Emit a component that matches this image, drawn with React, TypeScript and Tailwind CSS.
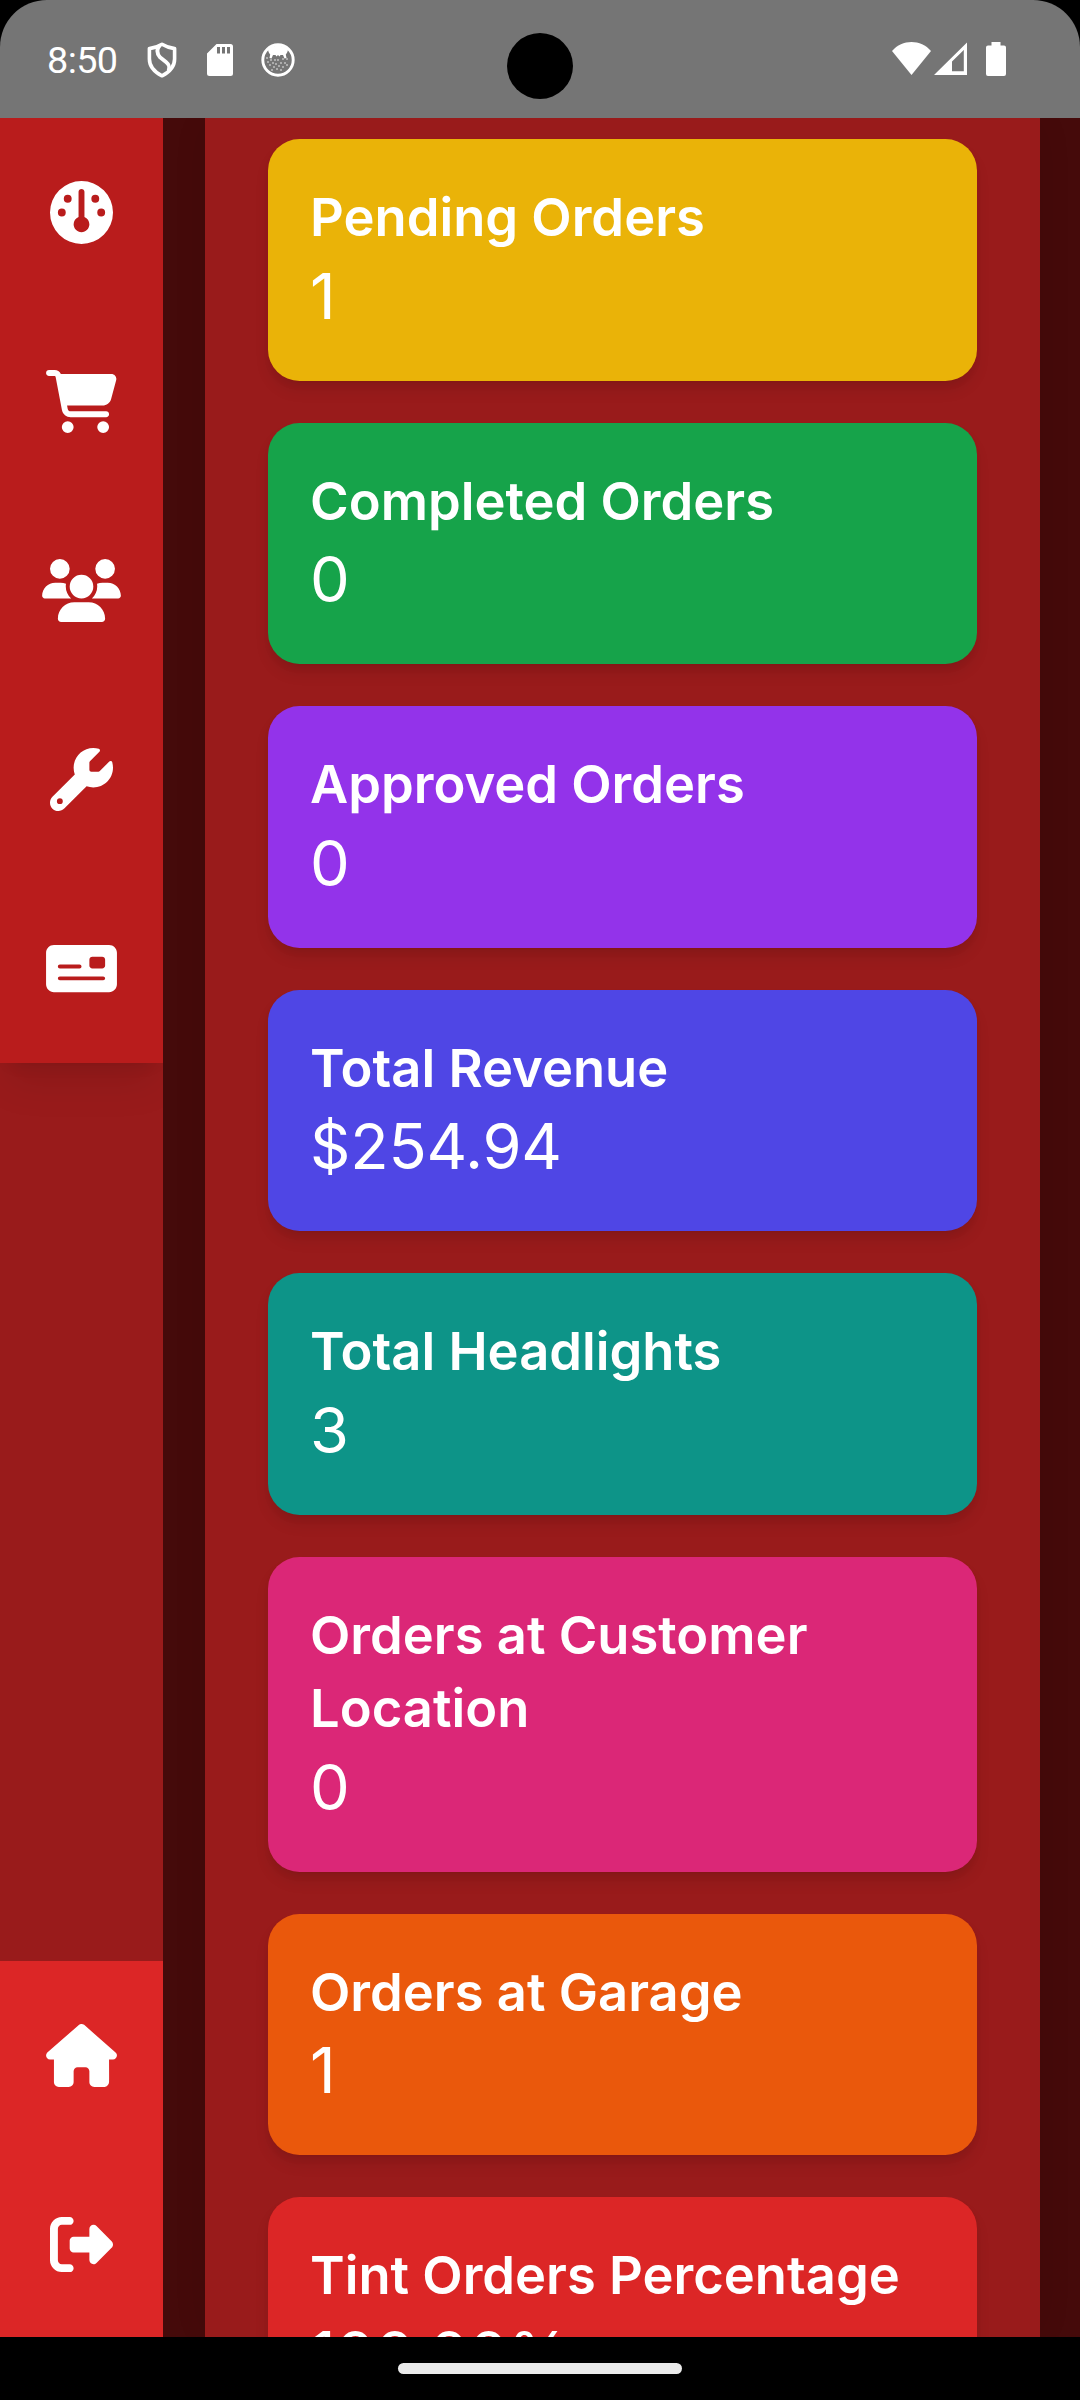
import React from "react";
import type { IconType } from "react-icons";
import {
  FaCartShopping,
  FaGauge,
  FaHouse,
  FaMoneyCheck,
  FaRightFromBracket,
  FaUsers,
  FaWrench,
} from "react-icons/fa6";

type NavItem = { label: string; Icon: IconType; width: string };
type Stat = { title: string; value: string; color: string };

const mainNav: NavItem[] = [
  { label: "Dashboard", Icon: FaGauge, width: "w-[63px]" },
  { label: "Orders", Icon: FaCartShopping, width: "w-[71px]" },
  { label: "Customers", Icon: FaUsers, width: "w-[79px]" },
  { label: "Services", Icon: FaWrench, width: "w-[63px]" },
  { label: "Payments", Icon: FaMoneyCheck, width: "w-[71px]" },
];

const footerNav: NavItem[] = [
  { label: "Home", Icon: FaHouse, width: "w-[71px]" },
  { label: "Log out", Icon: FaRightFromBracket, width: "w-[63px]" },
];

const stats: Stat[] = [
  { title: "Pending Orders", value: "1", color: "bg-[#eab308]" },
  { title: "Completed Orders", value: "0", color: "bg-[#16a34a]" },
  { title: "Approved Orders", value: "0", color: "bg-[#9333ea]" },
  { title: "Total Revenue", value: "$254.94", color: "bg-[#4f46e5]" },
  { title: "Total Headlights", value: "3", color: "bg-[#0d9488]" },
  { title: "Orders at Customer Location", value: "0", color: "bg-[#db2777]" },
  { title: "Orders at Garage", value: "1", color: "bg-[#ea580c]" },
  { title: "Tint Orders Percentage", value: "100.00%", color: "bg-[#dc2626]" },
];

function ShieldIcon() {
  return (
    <svg className="h-[36px] w-[30px]" viewBox="0 0 30 36" fill="none" stroke="#fff" strokeWidth="3.600" strokeLinejoin="round">
      <path d="M15 2.200C11.500 4.300 7 6 2.400 6.600V17c0 7.200 5 13 12.600 16.800C22.600 30 27.600 24.200 27.600 17V6.600C23 6 18.500 4.300 15 2.200Z" />
      <path d="M13 3.200C9.500 7 9.500 11 13 15.200L19 20C22 22.500 23 24.500 21.600 28.600" strokeWidth="3.800" />
    </svg>
  );
}

function SdCardIcon() {
  return (
    <svg className="h-[32px] w-[26px]" viewBox="0 0 26 32">
      <path
        fill="#fff"
        fillRule="evenodd"
        d="M9.500 0H23.500A2.500 2.500 0 0 1 26 2.500V29.500A2.500 2.500 0 0 1 23.500 32H2.500A2.500 2.500 0 0 1 0 29.500V9.500ZM10 3V9.500H13V3ZM15 3V9.500H18V3ZM20 3V9.500H23V3Z"
      />
    </svg>
  );
}

const specks: [number, number][] = [
  [6, 15], [7, 19], [9, 22], [10, 17], [12, 20], [13, 24], [11, 27], [16, 26],
  [15, 21], [17, 17], [18, 23], [20, 20], [20, 27], [22, 24], [22, 16], [24, 20],
  [26, 16], [26, 22], [14, 17],
];

function BadgeIcon() {
  return (
    <svg className="h-[34px] w-[34px]" viewBox="0 0 34 34" fill="none">
      <circle cx="17" cy="17" r="15.200" stroke="#fff" strokeWidth="2.900" />
      <path fill="#fff" d="M7 6C12 1.500 22 1.500 27 6C27 8.500 25.800 10.500 24.800 11.500L25.500 15L23.500 15.500L22 12L19.500 12L18.500 13.500L17 12L15.500 13.500L14.500 12L12 12L10.500 15.500L8.500 15L9.200 11.500C8.200 10.500 7 8.500 7 6Z" />
      {specks.map(([x, y]) => (
        <circle key={`${x}-${y}`} cx={x} cy={y} r="0.750" fill="#fff" />
      ))}
    </svg>
  );
}

function StatusBar() {
  return (
    <header className="h-[118px] shrink-0 bg-black">
      <div className="relative flex h-full items-start rounded-t-[47px] bg-[#757575] pl-[47px] pr-[74px]">
        <span className="mt-[39px] w-[100px] font-[Roboto,sans-serif] text-[37.8px] leading-[43px] tracking-[-0.6px] text-white">8:50</span>
        <div className="mt-[42px] flex">
          <ShieldIcon />
          <div className="ml-[30px] mt-[2px]"><SdCardIcon /></div>
          <div className="ml-[28px] mt-px"><BadgeIcon /></div>
        </div>
        <div className="absolute left-[507px] top-[33px] h-[66px] w-[66px] rounded-full bg-black" />
        <div className="ml-auto mt-[42px] flex">
          <svg className="h-[33px] w-[39px]" viewBox="0 0 39 33">
            <path fill="#fff" d="M0 9C10 -3 29 -3 39 9L19.500 33Z" />
          </svg>
          <svg className="ml-[3px] h-[33px] w-[33px]" viewBox="0 0 33 33">
            <path fill="#fff" fillRule="evenodd" d="M0 33L33 0.500V33ZM18 29.300H29.800V8L18 19.500Z" />
          </svg>
          <svg className="ml-[19px] h-[34px] w-[20px]" viewBox="0 0 20 34">
            <path fill="#fff" d="M5.500 0H14.500V3.500H18A2 2 0 0 1 20 5.500V32A2 2 0 0 1 18 34H2A2 2 0 0 1 0 32V5.500A2 2 0 0 1 2 3.500H5.500Z" />
          </svg>
        </div>
      </div>
    </header>
  );
}

function NavList({ items }: { items: NavItem[] }) {
  return (
    <>
      {items.map(({ label, Icon, width }) => (
        <a key={label} aria-label={label} className="flex h-[63px] shrink-0 justify-center text-white">
          <Icon className={`h-[63px] ${width}`} />
        </a>
      ))}
    </>
  );
}

function Sidebar() {
  return (
    <aside className="flex w-[163px] shrink-0 flex-col justify-between overflow-hidden bg-[#991b1b]">
      <nav className="flex flex-col gap-[126px] bg-[#b91c1c] py-[63px] shadow-[0_26px_39px_-8px_rgba(0,0,0,0.1),0_10.5px_16px_-10.5px_rgba(0,0,0,0.1)]">
        <NavList items={mainNav} />
      </nav>
      <nav className="flex h-[376px] flex-col gap-[126px] bg-[#dc2626] pt-[63px]">
        <NavList items={footerNav} />
      </nav>
    </aside>
  );
}

function StatCard({ title, value, color }: Stat) {
  return (
    <section className={`shrink-0 rounded-[31.5px] p-[42px] text-white shadow-[0_10.5px_15.75px_-2.6px_rgba(0,0,0,0.1),0_5.25px_10.5px_-5.25px_rgba(0,0,0,0.1)] ${color}`}>
      <h2 className="text-[52.5px] font-semibold leading-[73.5px]">{title}</h2>
      <p className="pb-[2px] text-[63px] leading-[82px] tracking-[-0.2px]">{value}</p>
    </section>
  );
}

export default function App() {
  return (
    <div className="flex h-[2400px] w-[1080px] flex-col overflow-hidden bg-black font-[Inter,sans-serif]">
      <StatusBar />
      <div className="flex h-[2219px] shrink-0 overflow-hidden bg-[#450a0a]">
        <Sidebar />
        <main className="ml-[42px] flex w-[835px] flex-col gap-[42px] bg-[#991b1b] px-[63px] pt-[21px] shadow-[0_0_39px_-8px_rgba(0,0,0,0.1)]">
          {stats.map((stat) => (
            <StatCard key={stat.title} {...stat} />
          ))}
        </main>
      </div>
      <footer className="flex h-[63px] justify-center bg-black pt-[26px]">
        <div className="h-[11px] w-[284px] rounded-full bg-[#ebebeb]" />
      </footer>
    </div>
  );
}
